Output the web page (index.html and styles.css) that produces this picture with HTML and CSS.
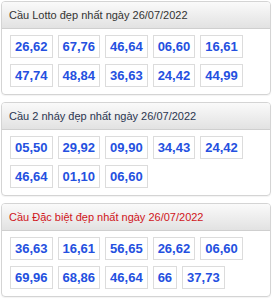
FILE: index.html
```html
<!DOCTYPE html>
<html>
<head>
<meta charset="utf-8">
<link rel="stylesheet" href="styles.css">
</head>
<body>
<div class="panel">
  <div class="head">Cầu Lotto đẹp nhất ngày 26/07/2022</div>
  <div class="body">
    <span class="num">26,62</span><span class="num">67,76</span><span class="num">46,64</span><span class="num">06,60</span><span class="num">16,61</span>
    <span class="num">47,74</span><span class="num">48,84</span><span class="num">36,63</span><span class="num">24,42</span><span class="num">44,99</span>
  </div>
</div>
<div class="panel">
  <div class="head head-navy">Cầu 2 nháy đẹp nhất ngày 26/07/2022</div>
  <div class="body">
    <span class="num">05,50</span><span class="num">29,92</span><span class="num">09,90</span><span class="num">34,43</span><span class="num">24,42</span>
    <span class="num">46,64</span><span class="num">01,10</span><span class="num">06,60</span>
  </div>
</div>
<div class="panel">
  <div class="head head-red">Cầu Đặc biệt đẹp nhất ngày 26/07/2022</div>
  <div class="body">
    <span class="num">36,63</span><span class="num">16,61</span><span class="num">56,65</span><span class="num">26,62</span><span class="num">06,60</span>
    <span class="num">69,96</span><span class="num">68,86</span><span class="num">46,64</span><span class="num">66</span><span class="num">37,73</span>
  </div>
</div>
</body>
</html>
```
FILE: styles.css
```css
html, body {
  margin: 0;
  padding: 0;
  background: #fff;
}
body {
  padding: 1px 0 0 1px;
  font-family: "Liberation Sans", Arial, sans-serif;
}
.panel {
  width: 270px;
  box-sizing: border-box;
  border: 1px solid #d4d4d4;
  border-radius: 4px;
  margin-bottom: 7px;
  overflow: hidden;
  box-shadow: 0 1px 1px rgba(0,0,0,0.05);
}
.head {
  height: 26px;
  line-height: 27px;
  padding-left: 7px;
  font-size: 11px;
  color: #333;
  background: linear-gradient(#fafafa, #e2e2e2);
  border-bottom: 1px solid #cfcfcf;
  white-space: nowrap;
}
.head-navy {
  color: #2a3550;
}
.head-red {
  color: #d0141a;
}
.body {
  display: flex;
  flex-wrap: wrap;
  gap: 6px 5px;
  padding: 6px 8px 7px 8px;
}
.num {
  display: block;
  height: 15px;
  line-height: 15px;
  padding: 3px 4px;
  border: 1px solid #dcdcdc;
  font-size: 13px;
  font-weight: bold;
  color: #2450e0;
  background: #fff;
}
```
